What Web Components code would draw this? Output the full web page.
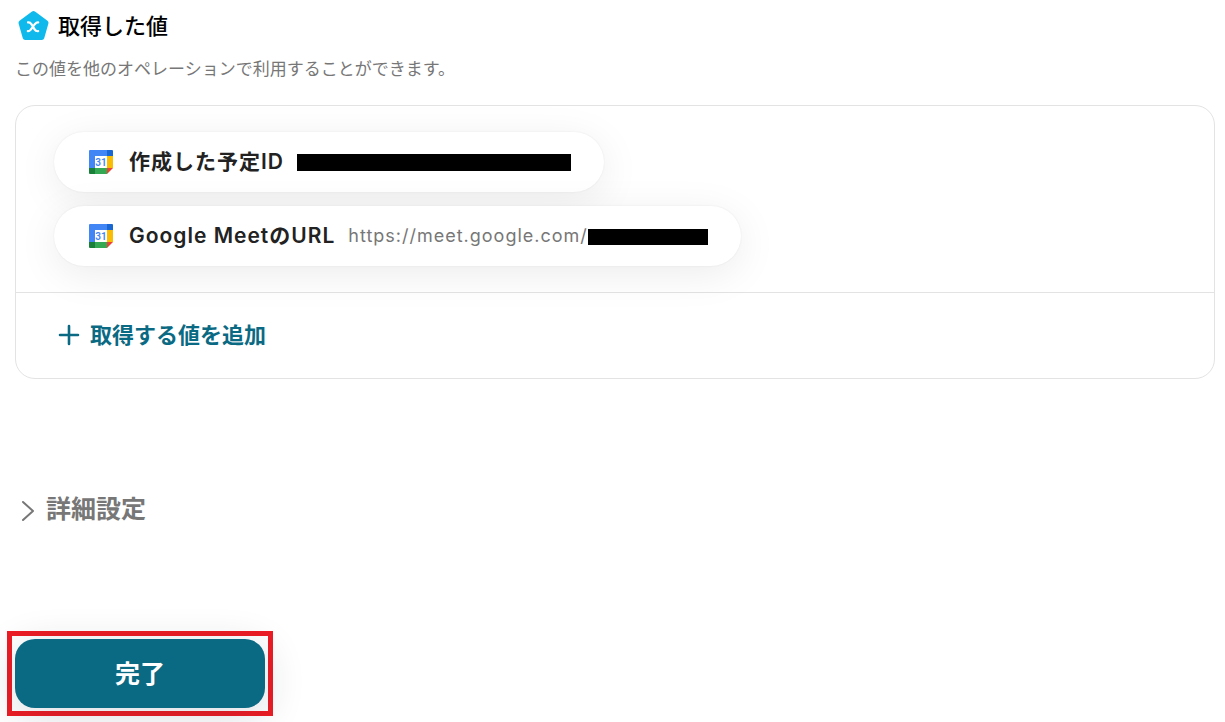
<!DOCTYPE html>
<html lang="ja">
<head>
<meta charset="utf-8">
<meta name="viewport" content="width=device-width, initial-scale=1">
<title>取得した値</title>
<style>
  body { margin: 0; background: #fff; color: #222; font-family: Inter, "Noto Sans CJK JP", sans-serif; }
</style>
</head>
<body>
<output-page></output-page>

<script>
const define = (name, html) => {
  const template = document.createElement('template');
  template.innerHTML = html;
  customElements.define(name, class extends HTMLElement {
    constructor() {
      super();
      this.attachShadow({ mode: 'open' }).append(template.content.cloneNode(true));
    }
  });
};

define('calendar-icon', `
  <style>:host { display: block; flex: none; width: 26px; height: 26px; } svg { display: block; }
  text { font: 600 10px Roboto, sans-serif; }</style>
  <svg width="26" height="26" viewBox="0 0 26 26" aria-hidden="true">
    <path d="M2 1H19V7H7V19H1V2Q1 1 2 1Z" fill="#4285f4"/>
    <path d="M19 1H24Q25 1 25 2V7H19Z" fill="#1967d2"/>
    <path d="M19 7H25V19H19Z" fill="#fbbc04"/>
    <path d="M7 19H19V25H7Z" fill="#34a853"/>
    <path d="M1 19H7V25H2Q1 25 1 24Z" fill="#188038"/>
    <path d="M19 19H25L19 25Z" fill="#ea4335"/>
    <path d="M7 7H19V19H7Z" fill="#fff"/>
    <text x="13" y="17" text-anchor="middle" fill="#4285f4">31</text>
  </svg>`);

define('section-heading', `
  <style>
    :host { display: block; }
    header { display: flex; align-items: center; gap: 8px; height: 32px; padding-left: 2px; }
    svg { flex: none; }
    h2 { margin: 0; font-size: 22px; line-height: 32px; font-weight: 500; color: #000; }
    p { margin: 15px 0 0; font-size: 17px; line-height: 24px; color: #777; }
  </style>
  <header>
    <svg width="33" height="32" viewBox="0 0 33 32" aria-hidden="true">
      <path d="M16.5 3.5L29 12.7L24.8 27.5H8.2L4 12.7Z" fill="#10b9ec" stroke="#10b9ec" stroke-width="5" stroke-linejoin="round"/>
      <path d="M11 12.4C13 12.2 13.6 12.8 14.4 14.2L17.6 19.4C18.4 20.8 19.4 21.4 21.2 21.2M21.2 12.4C19.6 12.2 18.8 13 17.8 14.2L13.8 19.6C12.8 20.8 12.2 21.4 10.8 21.2" fill="none" stroke="#fff" stroke-width="2.2" stroke-linecap="round"/>
    </svg>
    <h2><slot name="title"></slot></h2>
  </header>
  <p><slot></slot></p>`);

define('value-card', `
  <style>
    :host { display: block; border: 1px solid #e3e3e3; border-radius: 20px; }
    .values { display: flex; flex-direction: column; align-items: flex-start; gap: 14px; padding: 26px 38px; border-bottom: 1px solid #e3e3e3; }
    .footer { padding: 24px 38px 25px; }
  </style>
  <div class="values"><slot></slot></div>
  <div class="footer"><slot name="footer"></slot></div>`);

define('value-chip', `
  <style>
    :host { display: flex; align-items: center; box-sizing: border-box; height: 60px; padding: 0 33px 0 34px; border-radius: 30px; background: #fff; box-shadow: 0 0 2px rgba(0,0,0,.08), 0 8px 40px rgba(0,0,0,.08); white-space: nowrap; }
    .name { margin-left: 15px; font-size: 21px; line-height: 32px; font-weight: 600; color: #222; letter-spacing: 1px; }
    .value { display: flex; align-items: center; margin-left: 13px; font-size: 18px; line-height: 28px; color: #777; letter-spacing: 1px; }
  </style>
  <calendar-icon></calendar-icon>
  <span class="name"><slot name="name"></slot></span>
  <span class="value"><slot></slot></span>`);

define('redacted-bar', `
  <style>
    :host { display: block; width: 120px; height: 16px; margin-top: 2px; background: #000; }
    :host([long]) { width: 274px; height: 17px; margin-top: 0; }
  </style>`);

define('add-button', `
  <style>
    :host { display: block; }
    button { display: flex; align-items: center; gap: 10px; margin: 0; padding: 2px 4px; border: 0; background: none; color: #0b6a83; font: inherit; font-size: 22px; line-height: 32px; font-weight: 600; cursor: pointer; }
  </style>
  <button type="button">
    <svg width="22" height="22" viewBox="0 0 22 22" aria-hidden="true"><path d="M11 2V20M2 11H20" fill="none" stroke="currentColor" stroke-width="2.6" stroke-linecap="round"/></svg>
    <slot></slot>
  </button>`);

define('advanced-toggle', `
  <style>
    :host { display: block; }
    button { display: flex; align-items: center; gap: 11px; margin: 0; padding: 0 6px; border: 0; background: none; color: #777; font: inherit; font-size: 25px; line-height: 36px; font-weight: 600; cursor: pointer; }
    svg { margin-top: 4px; }
  </style>
  <button type="button" aria-expanded="false">
    <svg width="14" height="22" viewBox="0 0 14 22" aria-hidden="true"><path d="M2 2L12 11L2 20" fill="none" stroke="currentColor" stroke-width="2" stroke-linecap="round" stroke-linejoin="round"/></svg>
    <slot></slot>
  </button>`);

define('done-button', `
  <style>
    :host { display: block; width: fit-content; padding: 3px; border: 5px solid #ed1c24; }
    button { display: block; width: 250px; height: 69px; margin: 0; padding: 0; border: 0; border-radius: 20px; background: #0b6a83; color: #fff; font: inherit; font-size: 25px; line-height: 36px; font-weight: 600; cursor: pointer; box-shadow: 0 8px 40px rgba(20,40,70,.16); }
  </style>
  <button type="button"><slot></slot></button>`);

define('output-page', `
  <style>
    :host { display: block; padding: 10px 10px 6px 15px; }
    value-card { margin-top: 24px; }
    advanced-toggle { margin-top: 112px; }
    done-button { margin: 104px 0 0 -8px; }
  </style>
  <section-heading><span slot="title">取得した値</span>この値を他のオペレーションで利用することができます。</section-heading>
  <value-card>
    <value-chip><span slot="name">作成した予定ID</span><redacted-bar long></redacted-bar></value-chip>
    <value-chip><span slot="name">Google MeetのURL</span>https://meet.google.com/<redacted-bar></redacted-bar></value-chip>
    <add-button slot="footer">取得する値を追加</add-button>
  </value-card>
  <advanced-toggle>詳細設定</advanced-toggle>
  <done-button>完了</done-button>`);
</script>
</body>
</html>
